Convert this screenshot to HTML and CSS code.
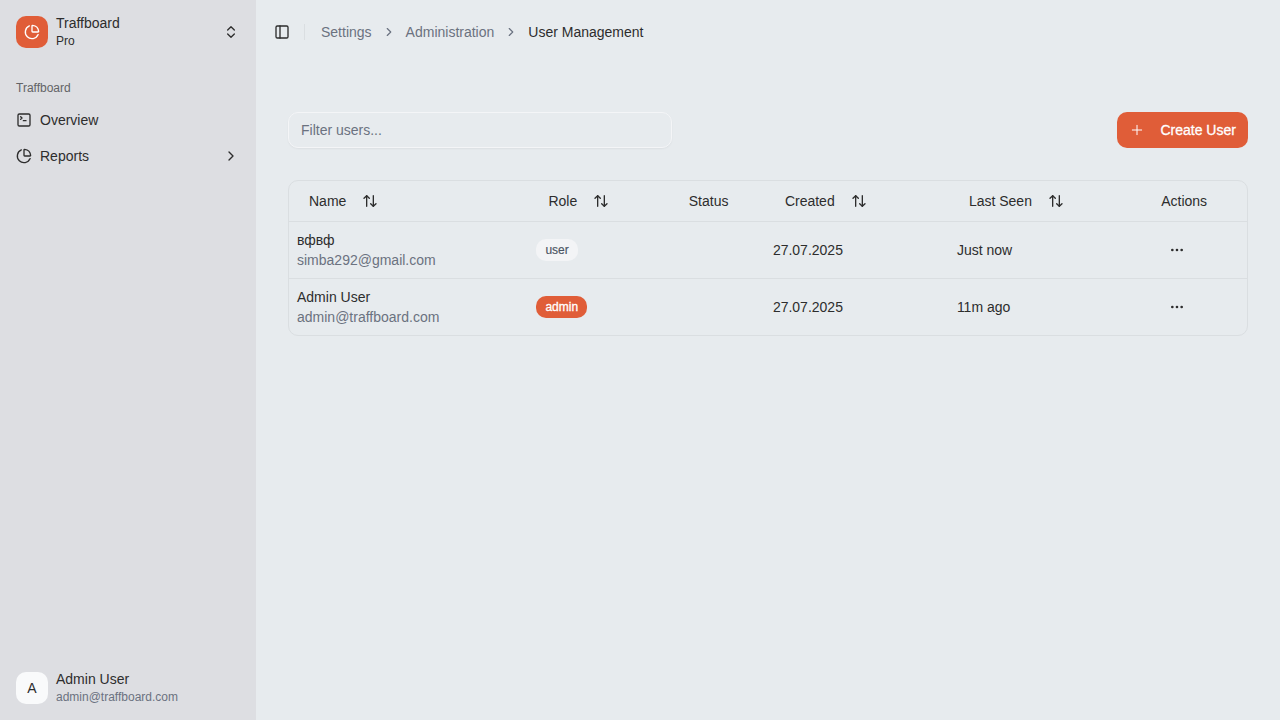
FILE: index.html
```html
<!DOCTYPE html>
<html lang="en">
<head>
<meta charset="utf-8">
<title>User Management</title>
<link rel="stylesheet" href="styles.css">
</head>
<body>
<svg class="sprite" width="0" height="0">
  <symbol id="pie" viewBox="0 0 24 24"><path d="M21 12c.552 0 1.005-.449.95-.998a10 10 0 0 0-8.953-8.951c-.55-.055-.998.398-.998.95v8a1 1 0 0 0 1 1z"/><path d="M21.21 15.89A10 10 0 1 1 8 2.83"/></symbol>
  <symbol id="updown" viewBox="0 0 24 24"><path d="m7 15 5 5 5-5"/><path d="m7 9 5-5 5 5"/></symbol>
  <symbol id="terminal" viewBox="0 0 24 24"><path d="m7 11 2-2-2-2"/><path d="M11 13h4"/><rect x="3" y="3" width="18" height="18" rx="2"/></symbol>
  <symbol id="right" viewBox="0 0 24 24"><path d="m9 18 6-6-6-6"/></symbol>
  <symbol id="panel" viewBox="0 0 24 24"><rect x="3" y="3" width="18" height="18" rx="2"/><path d="M9 3v18"/></symbol>
  <symbol id="plus" viewBox="0 0 24 24"><path d="M5 12h14M12 5v14"/></symbol>
  <symbol id="sort" viewBox="0 0 24 24"><path d="m21 16-4 4-4-4"/><path d="M17 20V4"/><path d="m3 8 4-4 4 4"/><path d="M7 4v16"/></symbol>
  <symbol id="dots" viewBox="0 0 24 24"><circle cx="12" cy="12" r="1"/><circle cx="19" cy="12" r="1"/><circle cx="5" cy="12" r="1"/></symbol>
</svg>
<div class="app">
  <aside class="sidebar">
    <div class="account">
      <div class="logo"><svg class="icon"><use href="#pie"/></svg></div>
      <div class="account-text"><span class="account-name">Traffboard</span><span class="account-sub">Pro</span></div>
      <svg class="icon"><use href="#updown"/></svg>
    </div>
    <nav class="nav">
      <div class="nav-label">Traffboard</div>
      <a class="nav-item"><svg class="icon"><use href="#terminal"/></svg><span class="nav-text">Overview</span></a>
      <a class="nav-item"><svg class="icon"><use href="#pie"/></svg><span class="nav-text">Reports</span><svg class="icon"><use href="#right"/></svg></a>
    </nav>
    <div class="account">
      <div class="avatar">A</div>
      <div class="account-text"><span class="account-name">Admin User</span><span class="account-sub muted">admin@traffboard.com</span></div>
    </div>
  </aside>
  <main class="main">
    <header class="topbar">
      <svg class="icon"><use href="#panel"/></svg>
      <span class="divider"></span>
      <nav class="crumbs">
        <span>Settings</span><svg class="crumb-sep"><use href="#right"/></svg><span>Administration</span><svg class="crumb-sep"><use href="#right"/></svg><span class="current">User Management</span>
      </nav>
    </header>
    <section class="content">
      <div class="toolbar">
        <input class="filter" placeholder="Filter users...">
        <button class="create"><svg class="icon"><use href="#plus"/></svg>Create User</button>
      </div>
      <div class="table">
        <div class="row head">
          <div class="sortable">Name<svg class="icon"><use href="#sort"/></svg></div>
          <div class="sortable">Role<svg class="icon"><use href="#sort"/></svg></div>
          <div>Status</div>
          <div class="sortable">Created<svg class="icon"><use href="#sort"/></svg></div>
          <div class="sortable">Last Seen<svg class="icon"><use href="#sort"/></svg></div>
          <div>Actions</div>
        </div>
        <div class="row">
          <div class="person"><span>вфвф</span><span class="muted">simba292@gmail.com</span></div>
          <div><span class="badge">user</span></div>
          <div></div>
          <div>27.07.2025</div>
          <div>Just now</div>
          <div><span class="more"><svg class="icon"><use href="#dots"/></svg></span></div>
        </div>
        <div class="row">
          <div class="person"><span>Admin User</span><span class="muted">admin@traffboard.com</span></div>
          <div><span class="badge badge-admin">admin</span></div>
          <div></div>
          <div>27.07.2025</div>
          <div>11m ago</div>
          <div><span class="more"><svg class="icon"><use href="#dots"/></svg></span></div>
        </div>
      </div>
    </section>
  </main>
</div>
</body>
</html>
```
FILE: styles.css
```css
* { box-sizing: border-box; }
body {
  margin: 0;
  font: 14px/20px "Liberation Sans", Arial, sans-serif;
  color: #2d2d2d;
  background: #e7ebee;
}
.sprite { display: none; }
.app { display: flex; height: 720px; }
.icon, .crumb-sep {
  width: 16px;
  height: 16px;
  flex: none;
  fill: none;
  stroke: currentColor;
  stroke-width: 2;
  stroke-linecap: round;
  stroke-linejoin: round;
}
.muted { color: #6b7280; }

.sidebar {
  width: 256px;
  flex: none;
  display: flex;
  flex-direction: column;
  background: #dddee2;
}
.account {
  display: flex;
  align-items: center;
  gap: 8px;
  height: 64px;
  padding: 0 17px 0 16px;
}
.logo, .avatar {
  display: flex;
  align-items: center;
  justify-content: center;
  width: 32px;
  height: 32px;
  border-radius: 10px;
}
.logo { background: #e05d38; color: #fff; }
.avatar { background: #f9fafb; }
.account-text { flex: 1; display: flex; flex-direction: column; }
.account-name { line-height: 18px; }
.account-sub { font-size: 12px; line-height: 18px; }
.nav { flex: 1; padding: 8px 8px; }
.nav-label {
  height: 32px;
  padding: 0 8px;
  font-size: 12px;
  line-height: 32px;
  color: #626366;
}
.nav-item {
  display: flex;
  align-items: center;
  gap: 8px;
  height: 32px;
  padding: 0 9px 0 8px;
  margin-bottom: 4px;
}
.nav-text { flex: 1; }

.main { flex: 1; }
.topbar { display: flex; align-items: center; height: 64px; padding: 0 18px; }
.divider { width: 1px; height: 16px; margin: 0 16px 0 14px; background: #dadee1; }
.crumbs { display: flex; align-items: center; gap: 10px; color: #6b7280; }
.crumb-sep { width: 14px; height: 14px; }
.current { color: #2d2d2d; }

.content { padding: 48px 32px; }
.toolbar { display: flex; justify-content: space-between; }
.filter {
  width: 384px;
  height: 36px;
  padding: 0 12px;
  border: 1px solid #f4f5f7;
  border-radius: 10px;
  background: transparent;
  box-shadow: 0 1px 2px rgba(0, 0, 0, .05);
  font: inherit;
}
.filter::placeholder { color: #6b7280; }
.create {
  display: flex;
  align-items: center;
  gap: 15.4px;
  height: 36px;
  width: 131px;
  padding: 0 12px;
  border: 0;
  border-radius: 10px;
  background: #e05d38;
  color: #fff;
  font: inherit;
  white-space: nowrap;
  -webkit-text-stroke: .3px #fff;
}
.create .icon { stroke-width: 1.5; }

.table { margin-top: 32px; border: 1px solid #dadee1; border-radius: 10px; }
.row {
  display: grid;
  grid-template-columns: 239.4px 152.4px 84.1px 184px 204.3px 1fr;
  align-items: center;
  height: 57px;
  padding-left: 8px;
  border-bottom: 1px solid #dadee1;
}
.row:last-child { height: 56px; border-bottom: 0; }
.row.head { height: 41px; }
.sortable { display: flex; align-items: center; gap: 16px; padding-left: 12px; }
.person { display: flex; flex-direction: column; }
.badge {
  display: inline-block;
  height: 22px;
  padding: 0 9px;
  border-radius: 10px;
  background: #f3f4f6;
  color: #4b5563;
  font-size: 12px;
  line-height: 22px;
  vertical-align: middle;
  -webkit-text-stroke: .15px currentColor;
}
.badge-admin { background: #e05d38; color: #fff; -webkit-text-stroke: .3px #fff; }
.more { display: flex; align-items: center; justify-content: center; width: 32px; height: 32px; }
```
